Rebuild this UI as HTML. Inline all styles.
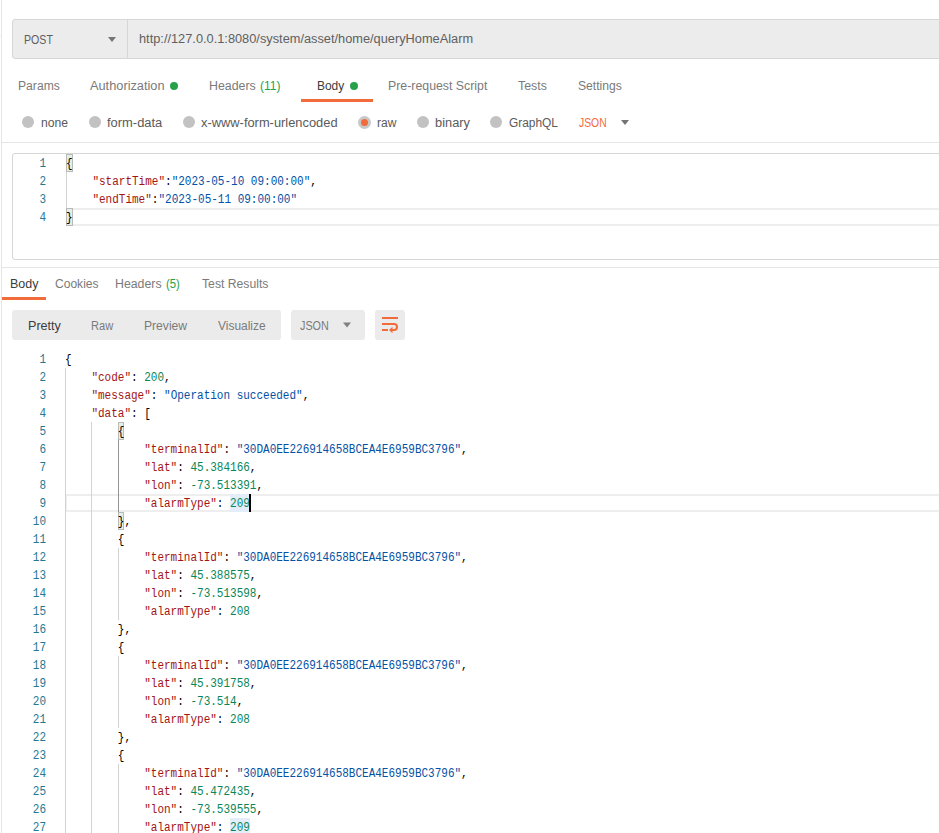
<!DOCTYPE html><html><head><meta charset="utf-8"><style>
html,body{margin:0;padding:0;background:#fff;width:939px;height:833px;overflow:hidden;position:relative}
.t{position:absolute;white-space:pre;font-family:"Liberation Sans",sans-serif}
.a{position:absolute}
.m{position:absolute;white-space:pre;font-family:"Liberation Mono",monospace;font-size:12px;line-height:18px;height:18px;transform:scaleX(0.91667);transform-origin:0 0}
.k{color:#a31515}.s{color:#0451a5}.n{color:#098658}.p{color:#000}
.ln{position:absolute;font-family:"Liberation Mono",monospace;font-size:12px;line-height:18px;color:#237893;text-align:right;width:40px;transform:scaleX(0.91667);transform-origin:100% 0}
</style></head><body>
<div class="a" style="left:1px;top:0;width:1px;height:833px;background:#e6e6e6"></div>
<div class="a" style="left:0;top:36px;width:1px;height:1px;background:#f0f0f0"></div>
<div class="a" style="left:12px;top:19px;width:940px;height:38px;background:#ececec;border:1px solid #d6d6d6;border-radius:3px"></div>
<div class="a" style="left:127px;top:20px;width:1px;height:38px;background:#d6d6d6"></div>
<svg class="a" style="left:107px;top:36px" width="10" height="7"><polygon points="1,1 9,1 5,6" fill="#747474"/></svg>
<div class="t" style="left:23.80px;top:33.84px;font-size:12px;line-height:12px;transform:scaleX(0.8848);transform-origin:0 0;color:#606060;">POST</div>
<div class="t" style="left:138.80px;top:32.84px;font-size:12px;line-height:12px;transform:scaleX(1.0658);transform-origin:0 0;color:#606060;">http://127.0.0.1:8080/system/asset/home/queryHomeAlarm</div>
<div class="t" style="left:17.70px;top:79.84px;font-size:12px;line-height:12px;transform:scaleX(1.0122);transform-origin:0 0;color:#7a7a7a;">Params</div>
<div class="t" style="left:89.50px;top:79.84px;font-size:12px;line-height:12px;transform:scaleX(1.0643);transform-origin:0 0;color:#7a7a7a;">Authorization</div>
<div class="a" style="left:170px;top:82px;width:8px;height:8px;border-radius:50%;background:#26a14a"></div>
<div class="t" style="left:208.80px;top:79.84px;font-size:12px;line-height:12px;transform:scaleX(1.0289);transform-origin:0 0;color:#7a7a7a;">Headers</div>
<div class="t" style="left:260.40px;top:79.84px;font-size:12px;line-height:12px;transform:scaleX(1.0050);transform-origin:0 0;color:#26a14a;">(11)</div>
<div class="t" style="left:316.90px;top:79.84px;font-size:12px;line-height:12px;transform:scaleX(0.9963);transform-origin:0 0;color:#3c3c3c;">Body</div>
<div class="a" style="left:350px;top:82px;width:8px;height:8px;border-radius:50%;background:#26a14a"></div>
<div class="a" style="left:301px;top:99px;width:72px;height:3px;background:#f26b3a"></div>
<div class="t" style="left:388.30px;top:79.84px;font-size:12px;line-height:12px;transform:scaleX(1.0278);transform-origin:0 0;color:#7a7a7a;">Pre-request Script</div>
<div class="t" style="left:518.40px;top:79.84px;font-size:12px;line-height:12px;transform:scaleX(1.0286);transform-origin:0 0;color:#7a7a7a;">Tests</div>
<div class="t" style="left:577.70px;top:79.84px;font-size:12px;line-height:12px;transform:scaleX(1.0116);transform-origin:0 0;color:#7a7a7a;">Settings</div>
<div class="a" style="left:22px;top:116px;width:12px;height:12px;border-radius:50%;background:#c2c2c2"></div>
<div class="t" style="left:40.60px;top:116.84px;font-size:12px;line-height:12px;transform:scaleX(1.0148);transform-origin:0 0;color:#5a5a5a;">none</div>
<div class="a" style="left:89px;top:116px;width:12px;height:12px;border-radius:50%;background:#c2c2c2"></div>
<div class="t" style="left:106.60px;top:116.84px;font-size:12px;line-height:12px;transform:scaleX(1.0769);transform-origin:0 0;color:#5a5a5a;">form-data</div>
<div class="a" style="left:183px;top:116px;width:12px;height:12px;border-radius:50%;background:#c2c2c2"></div>
<div class="t" style="left:201.20px;top:116.84px;font-size:12px;line-height:12px;transform:scaleX(1.0724);transform-origin:0 0;color:#5a5a5a;">x-www-form-urlencoded</div>
<div class="a" style="left:358px;top:116px;width:7px;height:7px;border-radius:50%;background:#f26b3a;border:3px solid #c8c8c8"></div>
<div class="t" style="left:376.50px;top:116.84px;font-size:12px;line-height:12px;transform:scaleX(1.0050);transform-origin:0 0;color:#5a5a5a;">raw</div>
<div class="a" style="left:417px;top:116px;width:12px;height:12px;border-radius:50%;background:#c2c2c2"></div>
<div class="t" style="left:435.00px;top:116.84px;font-size:12px;line-height:12px;transform:scaleX(1.0697);transform-origin:0 0;color:#5a5a5a;">binary</div>
<div class="a" style="left:490px;top:116px;width:12px;height:12px;border-radius:50%;background:#c2c2c2"></div>
<div class="t" style="left:508.80px;top:116.84px;font-size:12px;line-height:12px;transform:scaleX(0.9920);transform-origin:0 0;color:#5a5a5a;">GraphQL</div>
<div class="t" style="left:578.70px;top:116.84px;font-size:12px;line-height:12px;transform:scaleX(0.8625);transform-origin:0 0;color:#f26b3a;">JSON</div>
<svg class="a" style="left:620px;top:119px" width="10" height="7"><polygon points="1,1 9,1 5,6" fill="#747474"/></svg>
<div class="a" style="left:1px;top:142px;width:938px;height:1px;background:#e6e6e6"></div>
<div class="a" style="left:12px;top:153px;width:940px;height:105px;border:1px solid #d6d6d6;border-radius:3px"></div>
<div class="a" style="left:66px;top:208px;width:880px;height:14px;border:2px solid #eeeeee;border-right:none"></div>
<div class="a" style="left:66px;top:172px;width:1px;height:36px;background:#d3d3d3"></div>
<div class="a" style="left:66px;top:154px;width:5px;height:16px;border:1px solid #b9b9b9;background:#e6efe6"></div>
<div class="a" style="left:66px;top:208px;width:5px;height:16px;border:1px solid #b9b9b9;background:#e6efe6"></div>
<div class="ln" style="left:5.5px;top:155px">1</div>
<div class="m" style="left:66px;top:155px"><span class="p">{</span></div>
<div class="ln" style="left:5.5px;top:173px">2</div>
<div class="m" style="left:66px;top:173px">    <span class="k">"startTime"</span><span class="p">:</span><span class="s">"2023-05-10 09:00:00"</span><span class="p">,</span></div>
<div class="ln" style="left:5.5px;top:191px">3</div>
<div class="m" style="left:66px;top:191px">    <span class="k">"endTime"</span><span class="p">:</span><span class="s">"2023-05-11 09:00:00"</span></div>
<div class="ln" style="left:5.5px;top:209px">4</div>
<div class="m" style="left:66px;top:209px"><span class="p">}</span></div>
<div class="a" style="left:1px;top:267px;width:938px;height:1px;background:#e6e6e6"></div>
<div class="t" style="left:10.40px;top:277.84px;font-size:12px;line-height:12px;transform:scaleX(1.0407);transform-origin:0 0;color:#3c3c3c;">Body</div>
<div class="a" style="left:2px;top:297px;width:44px;height:3px;background:#f26b3a"></div>
<div class="t" style="left:54.90px;top:277.84px;font-size:12px;line-height:12px;transform:scaleX(1.0047);transform-origin:0 0;color:#7a7a7a;">Cookies</div>
<div class="t" style="left:114.90px;top:277.84px;font-size:12px;line-height:12px;transform:scaleX(1.0267);transform-origin:0 0;color:#7a7a7a;">Headers</div>
<div class="t" style="left:166.20px;top:277.84px;font-size:12px;line-height:12px;transform:scaleX(0.9400);transform-origin:0 0;color:#26a14a;">(5)</div>
<div class="t" style="left:201.60px;top:277.84px;font-size:12px;line-height:12px;transform:scaleX(1.0169);transform-origin:0 0;color:#7a7a7a;">Test Results</div>
<div class="a" style="left:12px;top:310px;width:269px;height:30px;background:#ebebeb;border-radius:3px"></div>
<div class="t" style="left:27.60px;top:319.84px;font-size:12px;line-height:12px;transform:scaleX(1.0484);transform-origin:0 0;color:#3c3c3c;">Pretty</div>
<div class="t" style="left:91.30px;top:319.84px;font-size:12px;line-height:12px;transform:scaleX(0.9250);transform-origin:0 0;color:#7a7a7a;">Raw</div>
<div class="t" style="left:144.40px;top:319.84px;font-size:12px;line-height:12px;transform:scaleX(1.0093);transform-origin:0 0;color:#7a7a7a;">Preview</div>
<div class="t" style="left:218.20px;top:319.84px;font-size:12px;line-height:12px;transform:scaleX(0.9958);transform-origin:0 0;color:#7a7a7a;">Visualize</div>
<div class="a" style="left:291px;top:310px;width:74px;height:30px;background:#ebebeb;border-radius:3px"></div>
<div class="t" style="left:300.10px;top:319.84px;font-size:12px;line-height:12px;transform:scaleX(0.9000);transform-origin:0 0;color:#7a7a7a;">JSON</div>
<svg class="a" style="left:342px;top:322px" width="10" height="7"><polygon points="1,0.5 9,0.5 5,5.5" fill="#808080"/></svg>
<div class="a" style="left:375px;top:310px;width:30px;height:30px;background:#ebebeb;border-radius:3px"></div>
<svg class="a" style="left:375px;top:310px" width="30" height="30"><g fill="#f26b3a"><rect x="7" y="7" width="16" height="2"/><rect x="7" y="19" width="6" height="2"/><polygon points="14,20 17.5,16.8 17.5,23.2"/></g><path d="M7 14 H19 A3 3 0 0 1 19 20 H16.5" fill="none" stroke="#f26b3a" stroke-width="2"/></svg>
<div class="a" style="left:65px;top:494px;width:880px;height:14px;border:2px solid #eeeeee;border-right:none"></div>
<div class="a" style="left:230px;top:494px;width:20px;height:18px;background:#e3eefa"></div>
<div class="a" style="left:230px;top:818px;width:20px;height:18px;background:#e3eefa"></div>
<div class="a" style="left:65px;top:368px;width:1px;height:18px;background:#d3d3d3"></div>
<div class="a" style="left:65px;top:386px;width:1px;height:18px;background:#d3d3d3"></div>
<div class="a" style="left:65px;top:404px;width:1px;height:18px;background:#d3d3d3"></div>
<div class="a" style="left:65px;top:422px;width:1px;height:18px;background:#d3d3d3"></div>
<div class="a" style="left:91px;top:422px;width:1px;height:18px;background:#d3d3d3"></div>
<div class="a" style="left:65px;top:440px;width:1px;height:18px;background:#d3d3d3"></div>
<div class="a" style="left:91px;top:440px;width:1px;height:18px;background:#d3d3d3"></div>
<div class="a" style="left:118px;top:440px;width:1px;height:18px;background:#939393"></div>
<div class="a" style="left:65px;top:458px;width:1px;height:18px;background:#d3d3d3"></div>
<div class="a" style="left:91px;top:458px;width:1px;height:18px;background:#d3d3d3"></div>
<div class="a" style="left:118px;top:458px;width:1px;height:18px;background:#939393"></div>
<div class="a" style="left:65px;top:476px;width:1px;height:18px;background:#d3d3d3"></div>
<div class="a" style="left:91px;top:476px;width:1px;height:18px;background:#d3d3d3"></div>
<div class="a" style="left:118px;top:476px;width:1px;height:18px;background:#939393"></div>
<div class="a" style="left:65px;top:494px;width:1px;height:18px;background:#d3d3d3"></div>
<div class="a" style="left:91px;top:494px;width:1px;height:18px;background:#d3d3d3"></div>
<div class="a" style="left:118px;top:494px;width:1px;height:18px;background:#939393"></div>
<div class="a" style="left:65px;top:512px;width:1px;height:18px;background:#d3d3d3"></div>
<div class="a" style="left:91px;top:512px;width:1px;height:18px;background:#d3d3d3"></div>
<div class="a" style="left:65px;top:530px;width:1px;height:18px;background:#d3d3d3"></div>
<div class="a" style="left:91px;top:530px;width:1px;height:18px;background:#d3d3d3"></div>
<div class="a" style="left:65px;top:548px;width:1px;height:18px;background:#d3d3d3"></div>
<div class="a" style="left:91px;top:548px;width:1px;height:18px;background:#d3d3d3"></div>
<div class="a" style="left:118px;top:548px;width:1px;height:18px;background:#d3d3d3"></div>
<div class="a" style="left:65px;top:566px;width:1px;height:18px;background:#d3d3d3"></div>
<div class="a" style="left:91px;top:566px;width:1px;height:18px;background:#d3d3d3"></div>
<div class="a" style="left:118px;top:566px;width:1px;height:18px;background:#d3d3d3"></div>
<div class="a" style="left:65px;top:584px;width:1px;height:18px;background:#d3d3d3"></div>
<div class="a" style="left:91px;top:584px;width:1px;height:18px;background:#d3d3d3"></div>
<div class="a" style="left:118px;top:584px;width:1px;height:18px;background:#d3d3d3"></div>
<div class="a" style="left:65px;top:602px;width:1px;height:18px;background:#d3d3d3"></div>
<div class="a" style="left:91px;top:602px;width:1px;height:18px;background:#d3d3d3"></div>
<div class="a" style="left:118px;top:602px;width:1px;height:18px;background:#d3d3d3"></div>
<div class="a" style="left:65px;top:620px;width:1px;height:18px;background:#d3d3d3"></div>
<div class="a" style="left:91px;top:620px;width:1px;height:18px;background:#d3d3d3"></div>
<div class="a" style="left:65px;top:638px;width:1px;height:18px;background:#d3d3d3"></div>
<div class="a" style="left:91px;top:638px;width:1px;height:18px;background:#d3d3d3"></div>
<div class="a" style="left:65px;top:656px;width:1px;height:18px;background:#d3d3d3"></div>
<div class="a" style="left:91px;top:656px;width:1px;height:18px;background:#d3d3d3"></div>
<div class="a" style="left:118px;top:656px;width:1px;height:18px;background:#d3d3d3"></div>
<div class="a" style="left:65px;top:674px;width:1px;height:18px;background:#d3d3d3"></div>
<div class="a" style="left:91px;top:674px;width:1px;height:18px;background:#d3d3d3"></div>
<div class="a" style="left:118px;top:674px;width:1px;height:18px;background:#d3d3d3"></div>
<div class="a" style="left:65px;top:692px;width:1px;height:18px;background:#d3d3d3"></div>
<div class="a" style="left:91px;top:692px;width:1px;height:18px;background:#d3d3d3"></div>
<div class="a" style="left:118px;top:692px;width:1px;height:18px;background:#d3d3d3"></div>
<div class="a" style="left:65px;top:710px;width:1px;height:18px;background:#d3d3d3"></div>
<div class="a" style="left:91px;top:710px;width:1px;height:18px;background:#d3d3d3"></div>
<div class="a" style="left:118px;top:710px;width:1px;height:18px;background:#d3d3d3"></div>
<div class="a" style="left:65px;top:728px;width:1px;height:18px;background:#d3d3d3"></div>
<div class="a" style="left:91px;top:728px;width:1px;height:18px;background:#d3d3d3"></div>
<div class="a" style="left:65px;top:746px;width:1px;height:18px;background:#d3d3d3"></div>
<div class="a" style="left:91px;top:746px;width:1px;height:18px;background:#d3d3d3"></div>
<div class="a" style="left:65px;top:764px;width:1px;height:18px;background:#d3d3d3"></div>
<div class="a" style="left:91px;top:764px;width:1px;height:18px;background:#d3d3d3"></div>
<div class="a" style="left:118px;top:764px;width:1px;height:18px;background:#d3d3d3"></div>
<div class="a" style="left:65px;top:782px;width:1px;height:18px;background:#d3d3d3"></div>
<div class="a" style="left:91px;top:782px;width:1px;height:18px;background:#d3d3d3"></div>
<div class="a" style="left:118px;top:782px;width:1px;height:18px;background:#d3d3d3"></div>
<div class="a" style="left:65px;top:800px;width:1px;height:18px;background:#d3d3d3"></div>
<div class="a" style="left:91px;top:800px;width:1px;height:18px;background:#d3d3d3"></div>
<div class="a" style="left:118px;top:800px;width:1px;height:18px;background:#d3d3d3"></div>
<div class="a" style="left:65px;top:818px;width:1px;height:18px;background:#d3d3d3"></div>
<div class="a" style="left:91px;top:818px;width:1px;height:18px;background:#d3d3d3"></div>
<div class="a" style="left:118px;top:818px;width:1px;height:18px;background:#d3d3d3"></div>
<div class="a" style="left:118px;top:422px;width:4px;height:16px;border:1px solid #b9b9b9;background:#e6efe6"></div>
<div class="a" style="left:118px;top:512px;width:4px;height:16px;border:1px solid #b9b9b9;background:#e6efe6"></div>
<div class="ln" style="left:5.5px;top:351px">1</div>
<div class="m" style="left:65.2px;top:351px"><span class="p">{</span></div>
<div class="ln" style="left:5.5px;top:369px">2</div>
<div class="m" style="left:65.2px;top:369px">    <span class="k">"code"</span><span class="p">:</span> <span class="n">200</span><span class="p">,</span></div>
<div class="ln" style="left:5.5px;top:387px">3</div>
<div class="m" style="left:65.2px;top:387px">    <span class="k">"message"</span><span class="p">:</span> <span class="s">"Operation succeeded"</span><span class="p">,</span></div>
<div class="ln" style="left:5.5px;top:405px">4</div>
<div class="m" style="left:65.2px;top:405px">    <span class="k">"data"</span><span class="p">:</span> <span class="p">[</span></div>
<div class="ln" style="left:5.5px;top:423px">5</div>
<div class="m" style="left:65.2px;top:423px">        <span class="p">{</span></div>
<div class="ln" style="left:5.5px;top:441px">6</div>
<div class="m" style="left:65.2px;top:441px">            <span class="k">"terminalId"</span><span class="p">:</span> <span class="s">"30DA0EE226914658BCEA4E6959BC3796"</span><span class="p">,</span></div>
<div class="ln" style="left:5.5px;top:459px">7</div>
<div class="m" style="left:65.2px;top:459px">            <span class="k">"lat"</span><span class="p">:</span> <span class="n">45.384166</span><span class="p">,</span></div>
<div class="ln" style="left:5.5px;top:477px">8</div>
<div class="m" style="left:65.2px;top:477px">            <span class="k">"lon"</span><span class="p">:</span> <span class="n">-73.513391</span><span class="p">,</span></div>
<div class="ln" style="left:5.5px;top:495px">9</div>
<div class="m" style="left:65.2px;top:495px">            <span class="k">"alarmType"</span><span class="p">:</span> <span class="n">209</span></div>
<div class="ln" style="left:5.5px;top:513px">10</div>
<div class="m" style="left:65.2px;top:513px">        <span class="p">}</span><span class="p">,</span></div>
<div class="ln" style="left:5.5px;top:531px">11</div>
<div class="m" style="left:65.2px;top:531px">        <span class="p">{</span></div>
<div class="ln" style="left:5.5px;top:549px">12</div>
<div class="m" style="left:65.2px;top:549px">            <span class="k">"terminalId"</span><span class="p">:</span> <span class="s">"30DA0EE226914658BCEA4E6959BC3796"</span><span class="p">,</span></div>
<div class="ln" style="left:5.5px;top:567px">13</div>
<div class="m" style="left:65.2px;top:567px">            <span class="k">"lat"</span><span class="p">:</span> <span class="n">45.388575</span><span class="p">,</span></div>
<div class="ln" style="left:5.5px;top:585px">14</div>
<div class="m" style="left:65.2px;top:585px">            <span class="k">"lon"</span><span class="p">:</span> <span class="n">-73.513598</span><span class="p">,</span></div>
<div class="ln" style="left:5.5px;top:603px">15</div>
<div class="m" style="left:65.2px;top:603px">            <span class="k">"alarmType"</span><span class="p">:</span> <span class="n">208</span></div>
<div class="ln" style="left:5.5px;top:621px">16</div>
<div class="m" style="left:65.2px;top:621px">        <span class="p">}</span><span class="p">,</span></div>
<div class="ln" style="left:5.5px;top:639px">17</div>
<div class="m" style="left:65.2px;top:639px">        <span class="p">{</span></div>
<div class="ln" style="left:5.5px;top:657px">18</div>
<div class="m" style="left:65.2px;top:657px">            <span class="k">"terminalId"</span><span class="p">:</span> <span class="s">"30DA0EE226914658BCEA4E6959BC3796"</span><span class="p">,</span></div>
<div class="ln" style="left:5.5px;top:675px">19</div>
<div class="m" style="left:65.2px;top:675px">            <span class="k">"lat"</span><span class="p">:</span> <span class="n">45.391758</span><span class="p">,</span></div>
<div class="ln" style="left:5.5px;top:693px">20</div>
<div class="m" style="left:65.2px;top:693px">            <span class="k">"lon"</span><span class="p">:</span> <span class="n">-73.514</span><span class="p">,</span></div>
<div class="ln" style="left:5.5px;top:711px">21</div>
<div class="m" style="left:65.2px;top:711px">            <span class="k">"alarmType"</span><span class="p">:</span> <span class="n">208</span></div>
<div class="ln" style="left:5.5px;top:729px">22</div>
<div class="m" style="left:65.2px;top:729px">        <span class="p">}</span><span class="p">,</span></div>
<div class="ln" style="left:5.5px;top:747px">23</div>
<div class="m" style="left:65.2px;top:747px">        <span class="p">{</span></div>
<div class="ln" style="left:5.5px;top:765px">24</div>
<div class="m" style="left:65.2px;top:765px">            <span class="k">"terminalId"</span><span class="p">:</span> <span class="s">"30DA0EE226914658BCEA4E6959BC3796"</span><span class="p">,</span></div>
<div class="ln" style="left:5.5px;top:783px">25</div>
<div class="m" style="left:65.2px;top:783px">            <span class="k">"lat"</span><span class="p">:</span> <span class="n">45.472435</span><span class="p">,</span></div>
<div class="ln" style="left:5.5px;top:801px">26</div>
<div class="m" style="left:65.2px;top:801px">            <span class="k">"lon"</span><span class="p">:</span> <span class="n">-73.539555</span><span class="p">,</span></div>
<div class="ln" style="left:5.5px;top:819px">27</div>
<div class="m" style="left:65.2px;top:819px">            <span class="k">"alarmType"</span><span class="p">:</span> <span class="n">209</span></div>
<div class="a" style="left:249px;top:494px;width:2px;height:18px;background:#000"></div>
</body></html>
